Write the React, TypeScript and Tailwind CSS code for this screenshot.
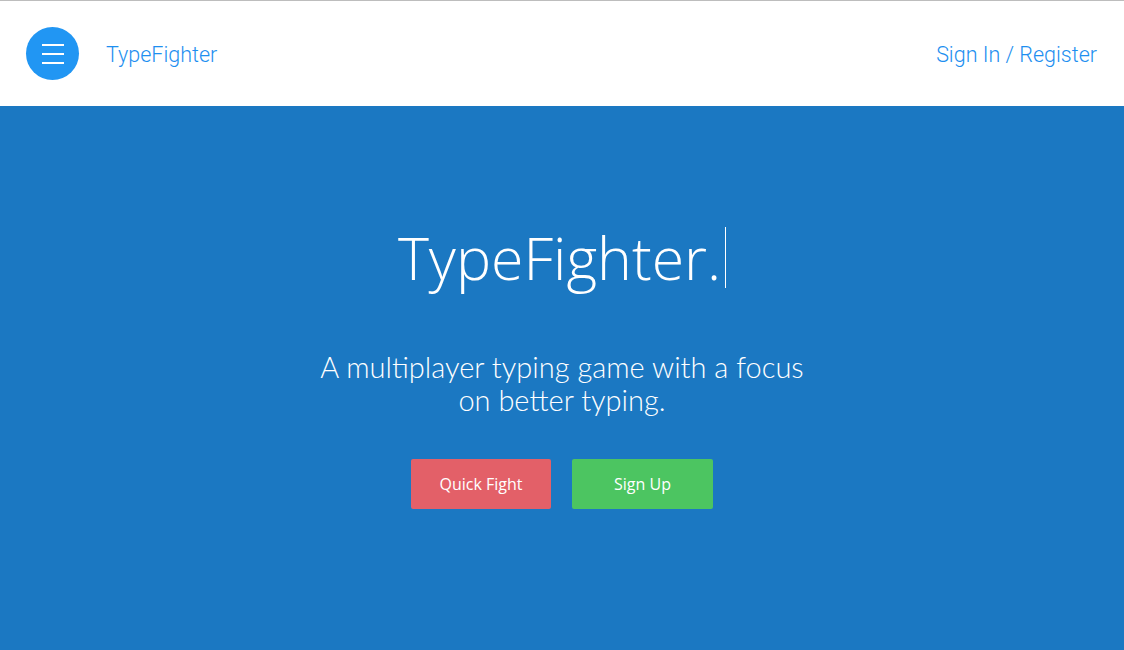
export default function App() {
  return (
    <div className="flex h-[650px] w-[1124px] flex-col overflow-hidden border-t border-[#bdbdbd] bg-[#1b78c2]">
      {/* Top bar */}
      <header className="flex h-[105px] shrink-0 items-center justify-between bg-white pl-[26px] pr-[27px]">
        <div className="flex items-center gap-[27px]">
          <button className="flex h-[53px] w-[53px] flex-col items-center justify-center gap-[7px] rounded-full bg-[#2196f3]">
            <span className="block h-[2px] w-[22px] bg-white" />
            <span className="block h-[2px] w-[22px] bg-white" />
            <span className="block h-[2px] w-[22px] bg-white" />
          </button>
          <span className="pt-[3px] font-['Roboto',sans-serif] text-[21.5px] font-light text-[#1e8ff0]">TypeFighter</span>
        </div>
        <a href="#" className="pt-[3px] font-['Roboto',sans-serif] text-[21.5px] font-light text-[#1e8ff0]">
          Sign In / Register
        </a>
      </header>

      {/* Hero */}
      <main className="flex flex-1 flex-col items-center pt-[115px] text-white">
        <h1 className="flex items-center font-['Open_Sans',sans-serif] text-[59px] font-light leading-[72px]">
          TypeFighter.
          <span className="ml-[4px] inline-block h-[61px] w-[1px] bg-white" />
        </h1>
        <p className="mt-[57px] w-[500px] text-center font-['Lato',sans-serif] text-[29px] font-light leading-[33px]">
          A multiplayer typing game with a focus on better typing.
        </p>
        <div className="mt-[43px] flex gap-[21px] font-['Open_Sans',sans-serif] text-[16px]">
          <button className="h-[50px] w-[140px] rounded-[2px] bg-[#e36068] text-white">Quick Fight</button>
          <button className="h-[50px] w-[141px] rounded-[2px] bg-[#4cc561] text-white">Sign Up</button>
        </div>
      </main>
    </div>
  );
}
